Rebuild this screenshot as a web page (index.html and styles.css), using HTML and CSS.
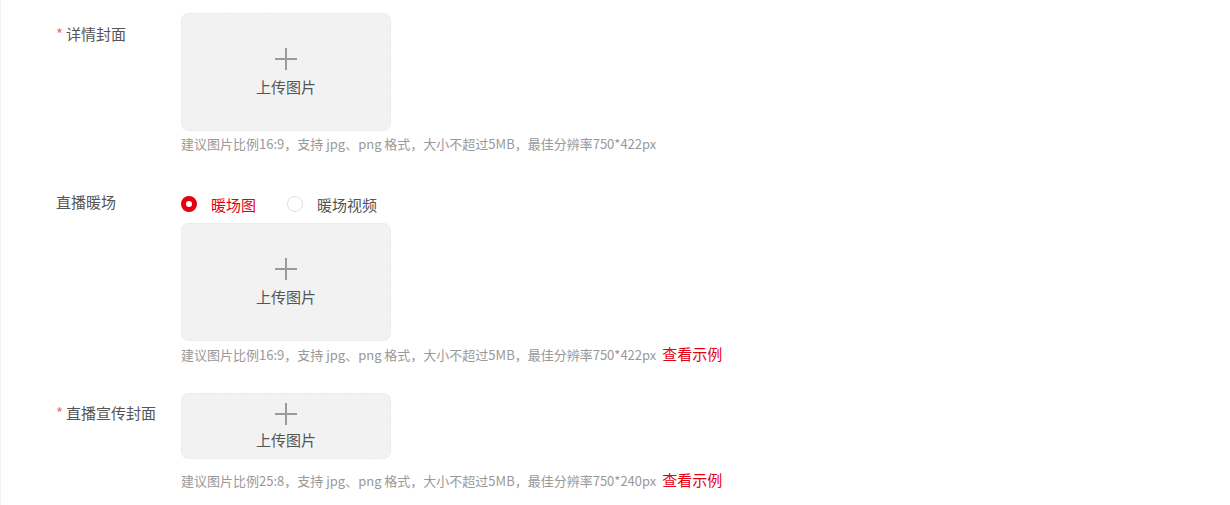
FILE: index.html
```html
<!DOCTYPE html>
<html>
<head>
    <meta charset="utf-8">
    <title>直播设置</title>
    <link rel="stylesheet" href="styles.css">
</head>
<body>
    <div class="page">
        <form class="form">
            <div class="form-item item-cover">
                <label class="form-label"><span class="req">*</span>详情封面</label>
                <div class="form-content">
                    <div class="upload">
                        <span class="plus"></span>
                        <span class="upload-text">上传图片</span>
                    </div>
                    <p class="tip">建议图片比例16:9，支持 jpg、png 格式，大小不超过5MB，最佳分辨率750*422px</p>
                </div>
            </div>
            <div class="form-item item-warm">
                <label class="form-label">直播暖场</label>
                <div class="form-content">
                    <div class="radios">
                        <label class="radio checked"><span class="radio-dot"></span><span class="radio-text">暖场图</span></label>
                        <label class="radio"><span class="radio-dot"></span><span class="radio-text">暖场视频</span></label>
                    </div>
                    <div class="upload">
                        <span class="plus"></span>
                        <span class="upload-text">上传图片</span>
                    </div>
                    <p class="tip">建议图片比例16:9，支持 jpg、png 格式，大小不超过5MB，最佳分辨率750*422px <a href="javascript:;" class="link">查看示例</a></p>
                </div>
            </div>
            <div class="form-item item-promo">
                <label class="form-label"><span class="req">*</span>直播宣传封面</label>
                <div class="form-content">
                    <div class="upload upload-small">
                        <span class="plus"></span>
                        <span class="upload-text">上传图片</span>
                    </div>
                    <p class="tip tip-far">建议图片比例25:8，支持 jpg、png 格式，大小不超过5MB，最佳分辨率750*240px <a href="javascript:;" class="link">查看示例</a></p>
                </div>
            </div>
        </form>
    </div>
</body>
</html>
```

FILE: styles.css
```css
*{
    margin: 0;
    padding: 0;
    box-sizing: border-box;
}
html,body{
    height: 100%;
}
body{
    background: #fff;
    font-family: "Microsoft YaHei", "Noto Sans CJK SC", "Liberation Sans", sans-serif;
    color: #555;
}
.page{
    min-height: 100%;
    border-left: 1px solid #f0f0f0;
    padding-top: 13px;
}
.form{
    padding-left: 55px;
}
.form-item{
    display: flex;
}
.item-warm{
    margin-top: 38px;
}
.item-promo{
    margin-top: 28px;
}
.form-label{
    width: 125px;
    flex-shrink: 0;
    font-size: 15px;
    line-height: 20px;
    padding-top: 11px;
    color: #555;
}
.item-warm .form-label{
    padding-top: 0;
}
.item-promo .form-label{
    padding-top: 10px;
}
.req{
    color: #f56c6c;
    margin-right: 3px;
}
.upload{
    width: 210px;
    height: 118px;
    background: #f2f2f2;
    border: 1px dashed #e8e8e8;
    border-radius: 8px;
    display: flex;
    flex-direction: column;
    align-items: center;
    justify-content: center;
    cursor: pointer;
}
.upload-small{
    height: 66px;
}
.plus{
    position: relative;
    width: 22px;
    height: 22px;
    margin-bottom: 7px;
}
.plus:before,
.plus:after{
    content: "";
    position: absolute;
    background: #9a9a9a;
}
.plus:before{
    left: 0;
    top: 10px;
    width: 22px;
    height: 2px;
}
.plus:after{
    left: 10px;
    top: 0;
    width: 2px;
    height: 22px;
}
.upload-small .plus{
    margin-bottom: 5px;
}
.upload-text{
    font-size: 15px;
    line-height: 20px;
    color: #555;
}
.tip{
    margin-top: 3px;
    font-size: 13px;
    line-height: 20px;
    color: #999;
    white-space: nowrap;
}
.tip-far{
    margin-top: 11px;
}
.link{
    margin-left: 3px;
    font-size: 15px;
    color: #e60012;
    text-decoration: none;
}
.radios{
    display: flex;
    height: 20px;
    align-items: center;
    margin-top: 2px;
    margin-bottom: 9px;
}
.radio{
    display: flex;
    align-items: center;
    margin-right: 31px;
    font-size: 15px;
    cursor: pointer;
}
.radio-dot{
    width: 16px;
    height: 16px;
    border-radius: 50%;
    border: 1px solid #dcdfe6;
    background: #fff;
    margin-right: 14px;
}
.radio.checked .radio-dot{
    border: 5px solid #e60012;
    background: #fff;
}
.radio.checked .radio-text{
    color: #e60012;
}
```
